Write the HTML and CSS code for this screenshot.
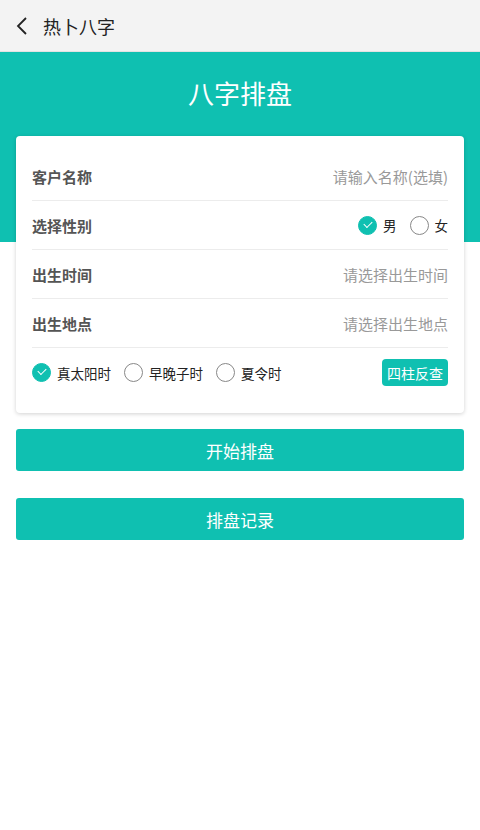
FILE: index.html
```html
<!DOCTYPE html>
<html lang="zh">
<head>
  <meta charset="UTF-8">
  <meta name="viewport" content="width=device-width, initial-scale=1.0">
  <title>热卜八字</title>
  <link rel="stylesheet" href="styles.css">
</head>
<body>

  <!-- Top bar -->
  <div class="topbar">
    <svg class="back" width="14" height="20" viewBox="0 0 14 20">
      <path d="M11 2 L3 10 L11 18" fill="none" stroke="#222" stroke-width="1.8"/>
    </svg>
    <span class="topbar-title">热卜八字</span>
  </div>

  <!-- Banner + form card -->
  <div class="banner">
    <h1>八字排盘</h1>
  </div>

  <div class="card">
    <div class="row">
      <span class="label">客户名称</span>
      <span class="placeholder">请输入名称(选填)</span>
    </div>
    <div class="row">
      <span class="label">选择性别</span>
      <div class="options">
        <span class="opt"><i class="radio checked"></i>男</span>
        <span class="opt"><i class="radio"></i>女</span>
      </div>
    </div>
    <div class="row">
      <span class="label">出生时间</span>
      <span class="placeholder">请选择出生时间</span>
    </div>
    <div class="row">
      <span class="label">出生地点</span>
      <span class="placeholder">请选择出生地点</span>
    </div>
    <div class="row last">
      <div class="options">
        <span class="opt"><i class="radio checked"></i>真太阳时</span>
        <span class="opt"><i class="radio"></i>早晚子时</span>
        <span class="opt"><i class="radio"></i>夏令时</span>
      </div>
      <button class="small-btn">四柱反查</button>
    </div>
  </div>

  <div class="actions">
    <button class="big-btn">开始排盘</button>
    <button class="big-btn">排盘记录</button>
  </div>

</body>
</html>
```

FILE: styles.css
```css
* {
  padding: 0;
  margin: 0;
  box-sizing: border-box;
}

body {
  font-family: 'Noto Sans CJK SC', 'Noto Sans', sans-serif;
  background: #fff;
  width: 480px;
  color: #333;
}

/* Top bar */
.topbar {
  height: 52px;
  background: #f3f3f3;
  display: flex;
  align-items: center;
  padding-left: 15px;
  border-bottom: 1px solid #e2e2e2;
}

.back {
  display: block;
  margin-right: 14px;
}

.topbar-title {
  font-size: 18px;
  color: #222;
}

/* Banner */
.banner {
  background: #0fc0b1;
  height: 190px;
  padding-top: 20px;
  text-align: center;
}

.banner h1 {
  font-size: 26px;
  font-weight: 400;
  color: #fff;
  line-height: 42px;
}

/* Card */
.card {
  margin: -106px 16px 0;
  background: #fff;
  border-radius: 4px;
  box-shadow: 0 1px 4px rgba(0, 0, 0, 0.18);
  padding: 16px 16px 16px;
  position: relative;
}

.row {
  height: 49px;
  display: flex;
  align-items: center;
  justify-content: space-between;
  border-bottom: 1px solid #ececec;
}

.row.last {
  border-bottom: none;
}

.label {
  font-size: 15px;
  font-weight: 700;
  color: #555;
}

.placeholder {
  font-size: 15px;
  color: #999;
}

.options {
  display: flex;
  align-items: center;
  gap: 13px;
}

.opt {
  display: flex;
  align-items: center;
  font-size: 13.5px;
  color: #222;
}

.radio {
  width: 19px;
  height: 19px;
  border-radius: 50%;
  border: 1px solid #888;
  margin-right: 6px;
  position: relative;
}

.radio.checked {
  background: #0fc0b1;
  border-color: #0fc0b1;
}

.radio.checked::after {
  content: "";
  position: absolute;
  left: 5px;
  top: 4px;
  width: 7px;
  height: 4px;
  border-left: 1.6px solid #fff;
  border-bottom: 1.6px solid #fff;
  transform: rotate(-45deg);
}

.small-btn {
  font-family: inherit;
  font-size: 14px;
  color: #fff;
  background: #0fc0b1;
  border: none;
  border-radius: 4px;
  height: 27px;
  padding: 0 5px;
}

/* Bottom buttons */
.actions {
  padding: 16px 16px 0;
  display: flex;
  flex-direction: column;
  gap: 27px;
}

.big-btn {
  font-family: inherit;
  height: 42px;
  border: none;
  border-radius: 3px;
  background: #0fc0b1;
  color: #fff;
  font-size: 17px;
}
```
